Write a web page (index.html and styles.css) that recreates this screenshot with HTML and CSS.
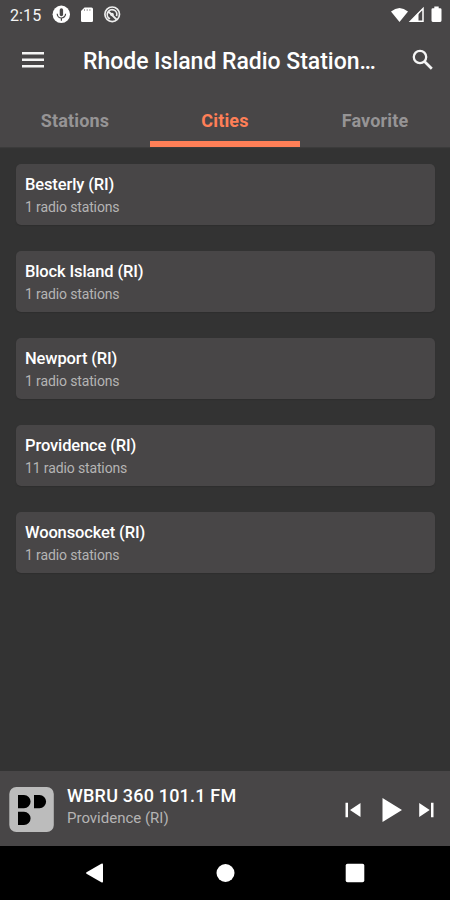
FILE: index.html
```html
<!DOCTYPE html>
<html lang="en">
<head>
<meta charset="utf-8">
<title>Rhode Island Radio Stations</title>
<link rel="stylesheet" href="styles.css">
</head>
<body>
<div class="screen">
  <header class="top">
    <div class="status">
      <span class="clock">2:15</span>
      <svg class="status-left" width="70" height="20" viewBox="0 0 70 20">
        <circle cx="9.3" cy="9.3" r="8.7" fill="#fff"/>
        <rect x="7.700" y="3.300" width="3.400" height="8" rx="1.700" fill="#484647"/>
        <path d="M5.200 8.800a4.200 4.200 0 0 0 8.400 0M9.400 12.800v3" fill="none" stroke="#484647" stroke-width="1.200"/>
        <path d="M32.500 2.500h7q1.500 0 1.500 1.500v11.800q0 1.200-1.200 1.200h-9.600q-1.200 0-1.200-1.200V6z" fill="#fff"/>
        <path d="M32.500 4v2M35.200 4v2M37.900 4v2" stroke="#a5a3a4" stroke-width="1"/>
        <circle cx="60.200" cy="9.300" r="7.300" fill="none" stroke="#eee" stroke-width="1.700"/>
        <path d="M58 13.800a4.800 4.800 0 1 1 6.500-2.600M56.500 6.500l8 8" fill="none" stroke="#eee" stroke-width="1.800"/>
        <circle cx="60" cy="9.500" r="1.800" fill="#eee"/>
      </svg>
      <svg class="status-right" width="54" height="20" viewBox="0 0 54 20">
        <path d="M1 6.500Q9.500-.5 18 6.500L9.500 17z" fill="#fff"/>
        <path d="M20.500 16.200 33 3.500v12.700z" fill="none" stroke="#fff" stroke-width="1.500"/>
        <path d="M20 17 28.500 7.500v9.500z" fill="#fff"/>
        <path d="M44.300 1.500h4.400v1.800h1.500q1.300 0 1.300 1.300v11q0 1.400-1.300 1.400h-7.400q-1.300 0-1.300-1.400v-11q0-1.300 1.300-1.300h1.500z" fill="#fff"/>
      </svg>
    </div>
    <div class="appbar">
      <svg class="menu" width="22" height="18" viewBox="0 0 22 18"><path d="M0 2.200h22M0 8.700h22M0 15.200h22" stroke="#f5f5f5" stroke-width="2.500"/></svg>
      <h1 class="title">Rhode Island Radio Station…</h1>
      <svg class="search" width="22" height="22" viewBox="0 0 22 22" fill="none" stroke="#f5f5f5"><circle cx="8" cy="8" r="6.200" stroke-width="2.300"/><path d="m12.500 12.500 7.300 7.300" stroke-width="2.700"/></svg>
    </div>
    <nav class="tabs">
      <span class="tab">Stations</span>
      <span class="tab active">Cities</span>
      <span class="tab">Favorite</span>
    </nav>
  </header>
  <main class="list">
    <div class="card"><div class="name">Besterly (RI)</div><div class="count">1 radio stations</div></div>
    <div class="card"><div class="name">Block Island (RI)</div><div class="count">1 radio stations</div></div>
    <div class="card"><div class="name">Newport (RI)</div><div class="count">1 radio stations</div></div>
    <div class="card"><div class="name">Providence (RI)</div><div class="count">11 radio stations</div></div>
    <div class="card"><div class="name">Woonsocket (RI)</div><div class="count">1 radio stations</div></div>
  </main>
  <section class="player">
    <svg class="logo" width="45" height="45" viewBox="0 0 45 45">
      <rect x=".3" width="44.500" height="45" rx="7" fill="#bcbcbc"/>
      <path d="M9 8h6a6.600 6.600 0 0 1 0 13.200H9zM25 8h5.500a6.600 6.600 0 0 1 0 13.200H25zM9 24.700h6a6.600 6.600 0 0 1 0 13.200H9z" fill="#000"/>
    </svg>
    <div class="track">
      <div class="track-name">WBRU 360 101.1 FM</div>
      <div class="track-city">Providence (RI)</div>
    </div>
    <svg class="controls" width="90" height="26" viewBox="0 0 90 26" fill="#fff">
      <path d="M.500 5.700h2.500v14.600H.500zM15.500 6v14L5 13zM37.500 1v24L57 13zM74.200 6v14L84.700 13zM86 5.700h2.500v14.600H86z"/>
    </svg>
  </section>
  <footer class="nav">
    <svg width="280" height="20" viewBox="0 0 280 20" fill="#fff">
      <path d="M16.300.8Q18 0 18 1.500v17q0 1.500-1.700.7L1.500 10.700q-1-.7 0-1.400z"/>
      <circle cx="140.500" cy="10" r="9"/>
      <rect x="260.700" y=".8" width="18.600" height="18.500" rx="1.800"/>
    </svg>
  </footer>
</div>
</body>
</html>
```
FILE: styles.css
```css
* { box-sizing: border-box; }
body {
  margin: 0;
  background: #333;
  font-family: Roboto, "Liberation Sans", sans-serif;
}
svg { display: block; flex: none; }
.screen {
  width: 450px;
  height: 900px;
  display: flex;
  flex-direction: column;
  background: #333;
  overflow: hidden;
}
.top {
  height: 147px;
  background: #484647;
  box-shadow: 0 1px 1px #3b3b3b;
}
.status {
  height: 30px;
  display: flex;
  align-items: center;
  padding: 0 6px 0 10px;
}
.clock {
  width: 42px;
  font-size: 16px;
  letter-spacing: .1px;
  color: #f5f5f5;
}
.status-right { margin-left: auto; }
.appbar {
  height: 63px;
  display: flex;
  align-items: center;
  padding: 0 16px 0 22px;
}
.menu { margin-bottom: 4px; }
.title {
  width: 310px;
  margin: 0 0 0 39px;
  font-size: 23px;
  font-weight: 500;
  letter-spacing: -.03px;
  line-height: 30px;
  white-space: nowrap;
  color: #fff;
}
.search {
  margin-left: auto;
  margin-bottom: 4px;
}
.tabs {
  height: 54px;
  display: grid;
  grid-template-columns: repeat(3, 1fr);
}
.tab {
  padding-top: 16px;
  font-size: 18px;
  font-weight: 700;
  letter-spacing: .15px;
  line-height: 24px;
  text-align: center;
  color: #969495;
}
.active {
  color: #ff7f57;
  border-bottom: 6px solid #ff7f57;
}
.list {
  flex: 1;
  display: flex;
  flex-direction: column;
  gap: 26.100px;
  padding: 17px 15px 0 16px;
}
.card {
  height: 61px;
  padding: 10px 9px 0;
  border-radius: 5px;
  background: #484647;
  box-shadow: 0 1px 1px #2e2e2e;
}
.name {
  font-size: 16.500px;
  font-weight: 500;
  letter-spacing: -.13px;
  line-height: 22px;
  color: #fff;
}
.count {
  font-size: 14px;
  letter-spacing: -.13px;
  line-height: 22px;
  color: #b5b4b4;
}
.player {
  height: 75px;
  display: flex;
  align-items: center;
  padding: 2px 15px 0 9px;
  background: #484647;
}
.track { margin: -7px 0 0 13px; }
.track-name {
  font-size: 18px;
  font-weight: 500;
  letter-spacing: .2px;
  line-height: 23px;
  color: #fff;
}
.track-city {
  font-size: 15px;
  line-height: 22px;
  color: #b5b4b4;
}
.controls { margin-left: auto; }
.nav {
  height: 54px;
  display: flex;
  align-items: center;
  padding-left: 85px;
  background: #000;
}
```
